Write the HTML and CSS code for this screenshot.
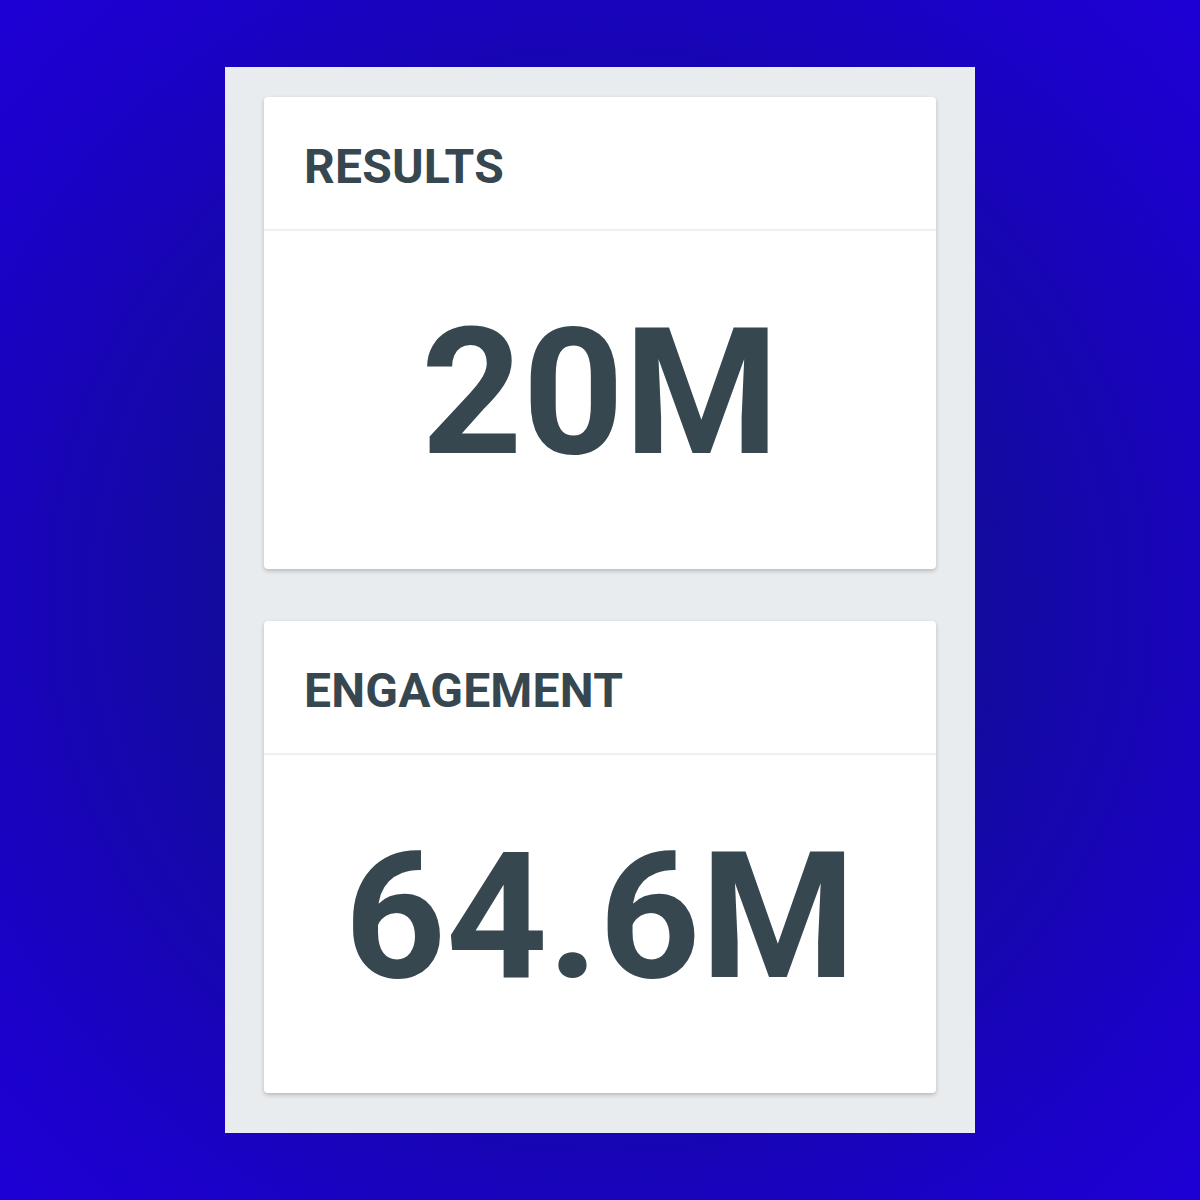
FILE: index.html
```html
<!DOCTYPE html>
<html lang="en">
<head>
    <meta charset="UTF-8">
    <meta name="viewport" content="width=device-width, initial-scale=1.0">
    <title>Stats</title>
    <link rel="stylesheet" href="styles.css">
</head>
<body>
    <div class="panel">
        <div class="card">
            <div class="card-header">
                <h2>RESULTS</h2>
            </div>
            <div class="card-body">
                <span class="value">20M</span>
            </div>
        </div>
        <div class="card">
            <div class="card-header">
                <h2>ENGAGEMENT</h2>
            </div>
            <div class="card-body">
                <span class="value">64.6M</span>
            </div>
        </div>
    </div>
</body>
</html>
```

FILE: styles.css
```css
html, body {
    height: 100%;
}
body {
    font-family: Roboto, "Liberation Sans", sans-serif;
    margin: 0;
    padding: 67px 0 0;
    box-sizing: border-box;
    background: radial-gradient(circle at 50% 50%, #12079a 0%, #130a9e 45%, #1a02c6 80%, #1e00d6 100%);
    display: flex;
    flex-direction: column;
    align-items: center;
}
.panel {
    background-color: #e9ecef;
    width: 750px;
    height: 1066px;
    box-sizing: border-box;
    padding: 30px 39px 40px;
    display: flex;
    flex-direction: column;
    gap: 52px;
}
.card {
    background-color: white;
    border-radius: 4px;
    box-shadow: 0 2px 4px rgba(0, 0, 0, 0.22);
    height: 473px;
    display: flex;
    flex-direction: column;
}
.card-header {
    height: 134px;
    box-sizing: border-box;
    border-bottom: 2px solid #eef0f2;
    padding: 6px 40px 0;
    display: flex;
    align-items: center;
}
.card-header h2 {
    margin: 0;
    font-size: 48px;
    font-weight: bold;
    letter-spacing: 0.2px;
    color: #37474f;
}
.card-body {
    flex: 1;
    display: flex;
    align-items: center;
    justify-content: center;
    padding-bottom: 16px;
}
.value {
    font-size: 177px;
    font-weight: bold;
    color: #37474f;
    line-height: 1;
}
```
